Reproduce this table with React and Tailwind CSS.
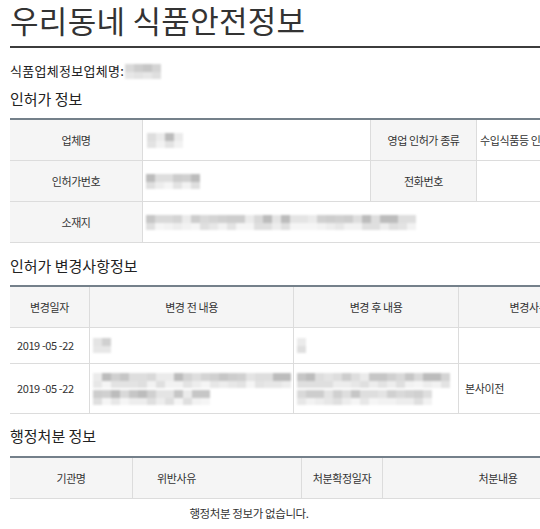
import React from "react";

const TOP = ["bg-[#d4d4d4]", "bg-[#cdcdcd]", "bg-[#dedede]", "bg-[#c6c6c6]", "bg-[#d9d9d9]", "bg-[#bcbcbc]", "bg-[#e4e4e4]", "bg-[#d0d0d0]", "bg-[#ebebeb]"];
const BOT = ["bg-[#ededed]", "bg-[#e3e3e3]", "bg-[#f2f2f2]", "bg-[#e7e7e7]", "bg-[#f5f5f5]", "bg-[#dfdfdf]"];

function Blur({ n, seed = 1, lines = 1, className = "" }) {
  const rows = [];
  let s = seed;
  const rnd = () => {
    s = (s * 9301 + 49297) % 233280;
    return s / 233280;
  };
  for (let l = 0; l < lines; l++) {
    const top = [];
    const bot = [];
    for (let i = 0; i < n; i++) {
      top.push(TOP[Math.floor(rnd() * TOP.length)]);
      bot.push(BOT[Math.floor(rnd() * BOT.length)]);
    }
    rows.push(
      <div key={l} className="flex flex-col">
        <div className="flex h-[8px]">
          {top.map((c, i) => (
            <div key={i} className={`w-[9px] shrink-0 ${c}`} />
          ))}
        </div>
        <div className="flex h-[7px]">
          {bot.map((c, i) => (
            <div key={i} className={`w-[9px] shrink-0 ${c}`} />
          ))}
        </div>
      </div>
    );
  }
  return <div className={`flex flex-col gap-[2px] blur-[0.8px] ${className}`}>{rows}</div>;
}

const th = "bg-[#f5f5f5] flex items-center justify-center text-[#333]";

export default function App() {
  return (
    <div
      className="w-[540px] h-[529px] overflow-hidden bg-white text-[#333]"
      style={{ fontFamily: '"Noto Sans CJK KR", "Noto Sans", sans-serif' }}
    >
      <div className="w-[640px] pl-[10px]">
        <h1 className="pb-[6px] text-[31px] leading-[40px] text-[#333] tracking-[0.3px] whitespace-nowrap">우리동네 식품안전정보</h1>
        <div className="h-[2px] bg-[#3c3c3c] w-[530px]" />

        <div className="mt-[13px] flex items-center leading-[20px] text-[13px] text-[#222] tracking-[0.3px]">
          <span>식품업체정보업체명:</span>
          <Blur n={4} seed={7} className="ml-[1px]" />
        </div>
        <div className="mt-[8px] leading-[20px] text-[15px] text-[#222]">인허가 정보</div>

        {/* Table 1 */}
        <div className="mt-[9px] border-t-2 border-[#74808a] text-[11px] tracking-[-0.4px]">
          <div className="grid grid-cols-[133px_227px_107px_150px] h-[41px] border-b border-[#dcdcdc]">
            <div className={`${th} border-r border-[#dcdcdc]`}>업체명</div>
            <div className="flex items-center pl-[4px]">
              <Blur n={4} seed={3} />
            </div>
            <div className={`${th} border-x border-[#dcdcdc]`}>영업 인허가 종류</div>
            <div className="flex items-center pl-[3px]">수입식품등 인터넷 구매대행업</div>
          </div>
          <div className="grid grid-cols-[133px_227px_107px_150px] h-[41px] border-b border-[#dcdcdc]">
            <div className={`${th} border-r border-[#dcdcdc]`}>인허가번호</div>
            <div className="flex items-center pl-[3px]">
              <Blur n={6} seed={11} />
            </div>
            <div className={`${th} border-x border-[#dcdcdc]`}>전화번호</div>
            <div />
          </div>
          <div className="grid grid-cols-[133px_484px] h-[41px] border-b border-[#dcdcdc]">
            <div className={`${th} border-r border-[#dcdcdc]`}>소재지</div>
            <div className="flex items-center pl-[3px]">
              <Blur n={30} seed={5} />
            </div>
          </div>
        </div>

        <div className="mt-[13px] leading-[20px] text-[15px] text-[#222]">인허가 변경사항정보</div>

        {/* Table 2 */}
        <div className="mt-[9px] border-t-2 border-[#74808a] text-[11px] tracking-[-0.4px]">
          <div className="grid grid-cols-[80px_204px_165px_140px] h-[41px] border-b border-[#dcdcdc]">
            <div className={`${th} border-r border-[#dcdcdc]`}>변경일자</div>
            <div className={`${th} border-r border-[#dcdcdc]`}>변경 전 내용</div>
            <div className={`${th} border-r border-[#dcdcdc]`}>변경 후 내용</div>
            <div className={th}>변경사유</div>
          </div>
          <div className="grid grid-cols-[80px_204px_165px_140px] h-[36px] border-b border-[#dcdcdc]">
            <div className="flex items-center pl-[7px] border-r border-[#dcdcdc]">2019 -05 -22</div>
            <div className="flex items-center pl-[3px] border-r border-[#dcdcdc]">
              <Blur n={2} seed={13} />
            </div>
            <div className="flex items-center pl-[3px] border-r border-[#dcdcdc]">
              <Blur n={1} seed={17} />
            </div>
            <div />
          </div>
          <div className="grid grid-cols-[80px_204px_165px_140px] h-[50px] border-b border-[#dcdcdc]">
            <div className="flex items-center pl-[7px] border-r border-[#dcdcdc]">2019 -05 -22</div>
            <div className="flex items-center pl-[3px] border-r border-[#dcdcdc]">
              <div className="flex flex-col gap-[2px]">
                <Blur n={22} seed={19} />
                <Blur n={13} seed={23} />
              </div>
            </div>
            <div className="flex items-center pl-[3px] border-r border-[#dcdcdc]">
              <div className="flex flex-col gap-[2px]">
                <Blur n={17} seed={29} />
                <Blur n={15} seed={31} />
              </div>
            </div>
            <div className="flex items-center pl-[6px]">본사이전</div>
          </div>
        </div>

        <div className="mt-[12px] leading-[20px] text-[15px] text-[#222]">행정처분 정보</div>

        {/* Table 3 */}
        <div className="mt-[10px] border-t-2 border-[#74808a] text-[11px] tracking-[-0.4px]">
          <div className="grid grid-cols-[123px_169px_81px_230px] h-[41px] border-b border-[#dcdcdc]">
            <div className={`${th} border-r border-[#dcdcdc]`}>기관명</div>
            <div className={`${th} !justify-start pl-[24px] border-r border-[#dcdcdc]`}>위반사유</div>
            <div className={`${th} border-r border-[#dcdcdc]`}>처분확정일자</div>
            <div className={th}>처분내용</div>
          </div>
          <div className="w-[478px] h-[30px] flex items-center justify-center text-[11.5px]">
            행정처분 정보가 없습니다.
          </div>
        </div>
      </div>
    </div>
  );
}
